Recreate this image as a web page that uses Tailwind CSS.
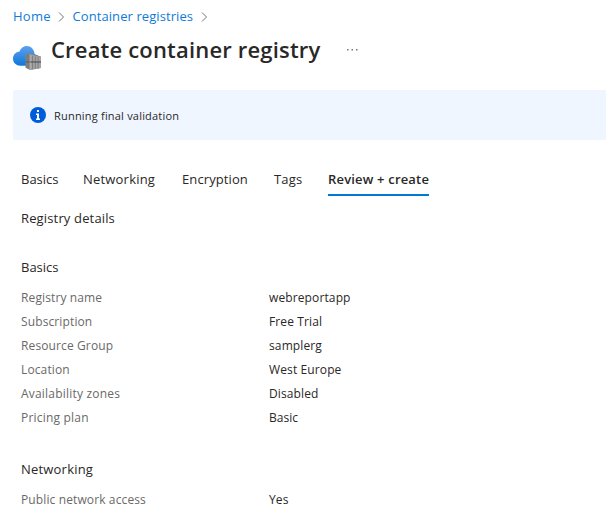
<!DOCTYPE html>
<html lang="en">
<head>
<meta charset="utf-8">
<title>Create container registry</title>
<script src="https://cdn.jsdelivr.net/npm/@tailwindcss/browser@4"></script>
</head>
<body class="h-[516px] overflow-hidden bg-white font-['Open_Sans','Noto_Sans',sans-serif] text-[13px] text-[#292827]">
<nav class="flex h-8 items-center pt-px pl-[13px] text-[#0f7bd8]">
  <a class="w-[38px] whitespace-nowrap tracking-[0.25px]">Home</a>
  <svg class="ml-[7px] h-[10px] w-[7px]" viewBox="0 0 7 10" fill="none" stroke="#777"><path d="M1 .5 5.500 5 1 9.500"/></svg>
  <a class="ml-[7.500px] w-[120px] whitespace-nowrap tracking-[0.080px]">Container registries</a>
  <svg class="ml-[8px] h-[10px] w-[7px]" viewBox="0 0 7 10" fill="none" stroke="#777"><path d="M1 .5 5.500 5 1 9.500"/></svg>
</nav>
<header class="flex h-[58px] items-start pl-[13px]">
  <svg class="mt-[14px] h-[25px] w-[29px] shrink-0" viewBox="0 0 29 25">
    <defs><linearGradient id="cloud" x1="0" y1="0" x2="0" y2="1"><stop stop-color="#5ea0ef"/><stop offset="1" stop-color="#0f78d8"/></linearGradient></defs>
    <path fill="url(#cloud)" d="M27 14c0-3-2.200-5.200-5.300-5.700C21.200 3.500 18 0 13.800 0 10.400 0 7.600 2.300 6.500 5.600 2.800 6.100 0 9 0 12.700 0 16.700 3.300 19.700 7.500 19.700H21.500c3.200 0 5.500-2.500 5.500-5.700z"/>
    <path fill="#858585" d="m12.500 8 4.500-.7 11 3.200v11.500l-11 2-4.500-2.300z"/>
    <path fill="#a3a3a3" d="m17 8.500 11 2.500v4.800l-11-.3zM17 17l11 .1v4.900l-11 2z"/>
    <path stroke="#707070" stroke-width=".7" d="M14 8.500v13M15.800 8.500v14M19.500 10v13M22.300 10.500v12.400M25.100 11v11.500"/>
    <path stroke="#555" stroke-width=".9" d="M12.500 15.900H28"/>
    <path stroke="#c4c4c4" stroke-width=".5" d="M17 8v15.700"/>
  </svg>
  <h1 class="-mt-px ml-[9px] w-[270px] whitespace-nowrap text-[22px] leading-9 font-semibold tracking-[0.18px]">Create container registry</h1>
  <svg class="mt-4 ml-[25px] h-[4px] w-[14px]" viewBox="0 0 14 4" fill="#777"><path d="M1 1h1.500v1.500H1zM5.500 1H7v1.500H5.500zM10 1h1.500v1.500H10z"/></svg>
</header>
<section class="ml-[13px] flex h-[50px] items-center rounded-l-xs bg-[#eff6ff] pl-[17px] text-[11px]">
  <svg class="h-4 w-4" viewBox="0 0 16 16"><circle cx="8" cy="8" r="8" fill="#015cda"/><path fill="#fff" d="M7 3h2v2H7zM6 6.500h3v5h1V13H6v-1.500h1V8H6z"/></svg>
  <span class="mt-[2px] ml-2 whitespace-nowrap tracking-[0.2px]">Running final validation</span>
</section>
<div class="mt-[22px] ml-[21px] flex h-[34px] leading-[34px]">
  <span class="w-[62px]">Basics</span>
  <span class="w-[99px] tracking-[0.2px]">Networking</span>
  <span class="w-[92px] tracking-[0.1px]">Encryption</span>
  <span class="w-[54px] tracking-[0.2px]">Tags</span>
  <span class="w-[101px] whitespace-nowrap border-b-2 border-[#0078d4] font-semibold tracking-[0.18px]">Review + create</span>
</div>
<main class="pl-[21px]">
  <h2 class="mt-[10px] leading-6 tracking-[0.15px]">Registry details</h2>
  <h3 class="mt-[25px] leading-6">Basics</h3>
  <dl class="mt-[7px] grid grid-cols-[248px_1fr] text-[12px] leading-6 tracking-[0.12px]">
    <dt class="text-[#6a6967]">Registry name</dt><dd>webreportapp</dd>
    <dt class="text-[#6a6967]">Subscription</dt><dd>Free Trial</dd>
    <dt class="text-[#6a6967]">Resource Group</dt><dd>samplerg</dd>
    <dt class="text-[#6a6967]">Location</dt><dd>West Europe</dd>
    <dt class="tracking-[0.2px] text-[#6a6967]">Availability zones</dt><dd>Disabled</dd>
    <dt class="tracking-[0.2px] text-[#6a6967]">Pricing plan</dt><dd class="tracking-normal">Basic</dd>
  </dl>
  <h3 class="mt-[27px] leading-6 tracking-[0.2px]">Networking</h3>
  <dl class="mt-[7px] grid grid-cols-[248px_1fr] text-[12px] leading-6 tracking-[0.12px]">
    <dt class="text-[#6a6967]">Public network access</dt><dd>Yes</dd>
  </dl>
</main>
</body>
</html>
